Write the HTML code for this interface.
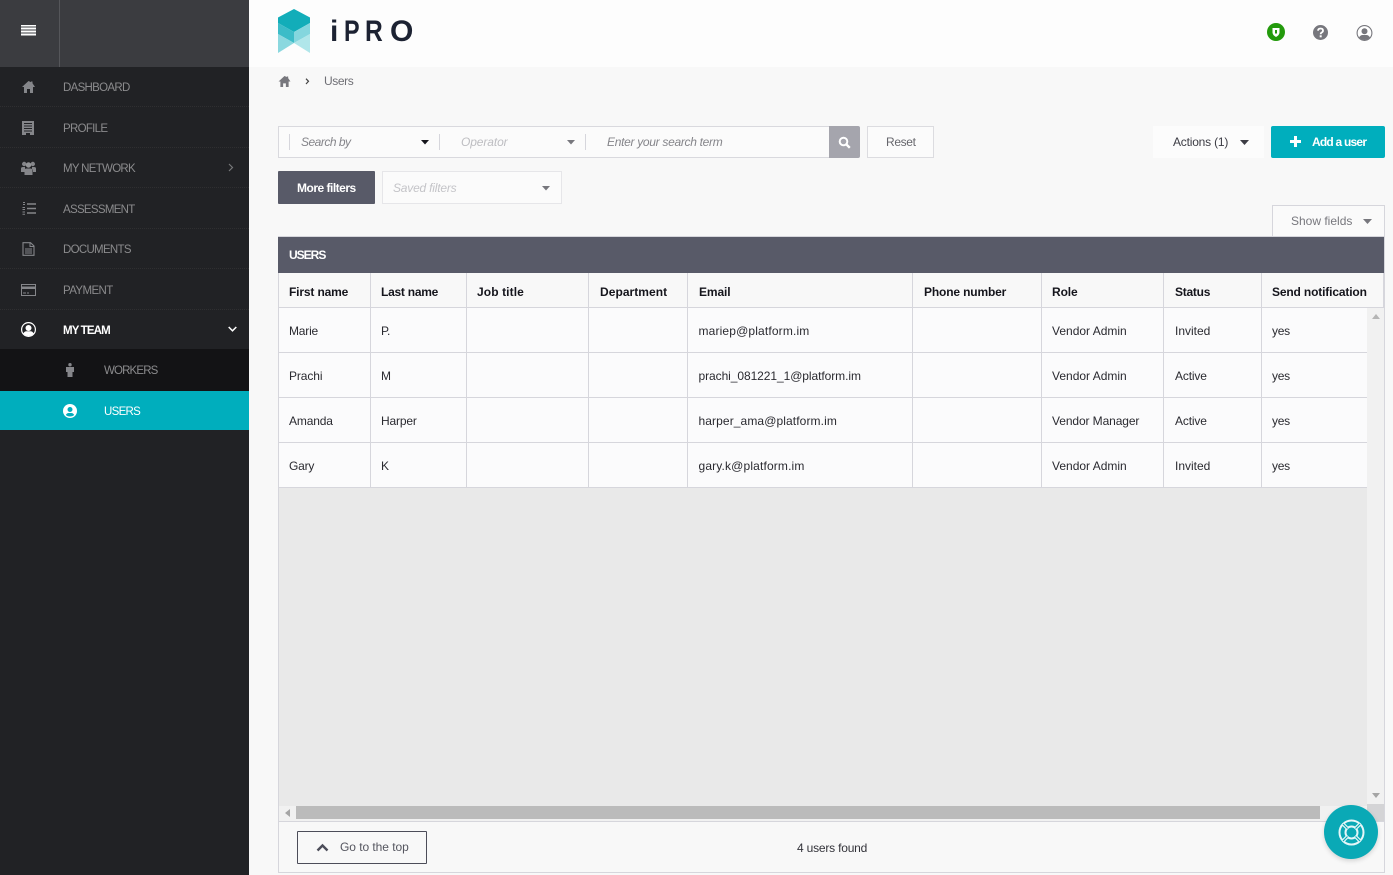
<!DOCTYPE html>
<html><head><meta charset="utf-8"><title>Users</title>
<style>
*{box-sizing:border-box}
html,body{margin:0;padding:0;width:1393px;height:875px;overflow:hidden;background:#f8f8f8;font-family:"Liberation Sans",sans-serif;font-size:12px;color:#222}
.a{position:absolute}
.t{position:absolute;white-space:nowrap;line-height:16px;letter-spacing:-.2px}
.n{font-size:11.5px;color:#8b8b8d;letter-spacing:-.7px;margin-top:1px}
.h{font-weight:bold;color:#15151c;font-size:12px;letter-spacing:-.1px}
.c{color:#2a2a30;font-size:12px;letter-spacing:0}
.l{position:absolute;background:#d6d6dc}
.sep{position:absolute;left:0;width:249px;height:0;border-top:1px dotted #2f2f31}
.lg{position:absolute;top:14px;font-size:30px;line-height:34px;font-weight:bold;color:#1c2232;transform-origin:0 50%}
svg{position:absolute;display:block}
</style></head><body>
<div class="a" style="left:0;top:0;width:1393px;height:67px;background:#fdfdfd"></div>
<div class="a" style="left:0;top:0;width:249px;height:875px;background:#212225"></div>
<div class="a" style="left:0;top:0;width:249px;height:67px;background:#3b3c40"></div>
<div class="a" style="left:59px;top:0;width:1px;height:67px;background:#55565a"></div>
<svg style="left:21px;top:25px" width="15" height="11"><path d="M0 .5h15M0 3.500h15M0 6.500h15M0 9.500h15" stroke="#fff" stroke-width="2"/></svg>
<div class="sep" style="top:106px"></div><div class="sep" style="top:147px"></div><div class="sep" style="top:187px"></div><div class="sep" style="top:228px"></div><div class="sep" style="top:268px"></div><div class="sep" style="top:309px"></div>
<div class="a" style="left:0;top:349px;width:249px;height:42px;background:#131315"></div>
<div class="a" style="left:0;top:391px;width:249px;height:39px;background:#00aebd"></div>
<svg style="left:22px;top:81px" width="13" height="12" viewBox="0 0 13 12"><path d="M6.500 0L0 6h2v6h3V8h3v4h3V6h2L10.500 2.300V.5H9v.6L6.500 0z" fill="#85868a"/></svg>
<svg style="left:22px;top:121px" width="12" height="14" viewBox="0 0 12 14"><path d="M0 0h12v14H8v-2H4v2H0z" fill="#85868a"/><path d="M2 2.500h8M2 5h8M2 7.500h8M2 10h8" stroke="#212225" stroke-width="1"/></svg>
<svg style="left:21px;top:161px" width="15" height="14" viewBox="0 0 15 14"><circle cx="3.200" cy="3" r="2.200" fill="#85868a"/><circle cx="11.800" cy="3" r="2.200" fill="#85868a"/><circle cx="7.500" cy="4" r="2.700" fill="#939497"/><path d="M0 11V7.500Q0 6 2 6h2v5zM15 11V7.500Q15 6 13 6h-2v5zM3.500 14V9.500Q3.500 7.500 5.500 7.500h4q2 0 2 2V14z" fill="#85868a"/></svg>
<svg style="left:22px;top:202px" width="14" height="13" viewBox="0 0 14 13"><path d="M5 2h9M5 6.500h9M5 11h9" stroke="#85868a" stroke-width="1.600"/><path d="M1 .5h2M1 2.500h2M.5 5.500h2.500M.5 7.500h2.500M.5 10h2.500M.5 12.300h2.500" stroke="#85868a" stroke-width="1"/></svg>
<svg style="left:22px;top:242px" width="13" height="14" viewBox="0 0 13 14"><path d="M1 .7h7.500L12 4v9.300H1z" fill="none" stroke="#85868a" stroke-width="1.100"/><path d="M8 1v3.500h4M3 7h7M3 9h7M3 11h7" stroke="#85868a" fill="none"/></svg>
<svg style="left:21px;top:284px" width="15" height="12" viewBox="0 0 15 12"><rect x=".5" y=".5" width="14" height="11" fill="none" stroke="#85868a"/><path d="M0 2.500h15V5H0z" fill="#85868a"/><path d="M2 9h3M6 9h2" stroke="#85868a"/></svg>
<svg style="left:21px;top:322px" width="15" height="15" viewBox="0 0 15 15"><circle cx="7.500" cy="7.500" r="7.500" fill="#fff"/><circle cx="7.500" cy="7.500" r="6.300" fill="#212225"/><circle cx="7.500" cy="6" r="3" fill="#fff"/><path d="M2.300 11.500Q3.500 9.300 5.500 9.300h4q2 0 3.200 2.200Q10.500 14 7.500 14t-5.200-2.500z" fill="#fff"/></svg>
<svg style="left:66px;top:363px" width="8" height="14" viewBox="0 0 8 14"><circle cx="4" cy="1.700" r="1.700" fill="#85868a"/><path d="M0 4h8v5H6.500v5h-5V9H0z" fill="#85868a"/></svg>
<svg style="left:63px;top:404px" width="14" height="14" viewBox="0 0 14 14"><circle cx="7" cy="7" r="7" fill="#fff"/><circle cx="7" cy="5.500" r="2.500" fill="#00aebd"/><path d="M2.800 11Q4 9 5.500 9h3q1.500 0 2.700 2Q9.500 12.500 7 12.500T2.800 11z" fill="#00aebd"/></svg>
<div class="t n" style="left:63px;top:79px">DASHBOARD</div>
<div class="t n" style="left:63px;top:120px">PROFILE</div>
<div class="t n" style="left:63px;top:160px">MY NETWORK</div>
<div class="t n" style="left:63px;top:201px">ASSESSMENT</div>
<div class="t n" style="left:63px;top:241px">DOCUMENTS</div>
<div class="t n" style="left:63px;top:282px;letter-spacing:-.6px">PAYMENT</div>
<div class="t n" style="left:63px;top:322px;color:#fff;font-weight:bold;letter-spacing:-.85px">MY TEAM</div>
<div class="t n" style="left:104px;top:362px;letter-spacing:-.85px">WORKERS</div>
<div class="t n" style="left:104px;top:403px;color:#fff">USERS</div>
<svg style="left:228px;top:163px" width="6" height="9"><path d="M1 1l3.500 3.500L1 8" fill="none" stroke="#77787a" stroke-width="1.200"/></svg>
<svg style="left:228px;top:326px" width="9" height="7"><path d="M.7 1l3.800 3.800L8.300 1" fill="none" stroke="#fff" stroke-width="1.500"/></svg>

<svg style="left:278px;top:9px" width="32" height="44" viewBox="0 0 32 44"><path d="M16 0L32 8.500V14L16 23 0 14V8.500z" fill="#12adb9"/><path d="M0 14L16 23V34L0 25z" fill="#3cbcc8"/><path d="M32 14L16 23V34L32 25z" fill="#84d6de"/><path d="M0 25L16 34 0 44z" fill="#8bd8df"/><path d="M32 25L16 34 32 44z" fill="#b0e6ea"/></svg>
<div class="lg" style="left:330px;top:15px">i</div>
<div class="lg" style="left:343.500px;top:15px;transform:scaleX(.78)">P</div>
<div class="lg" style="left:364.500px;top:15px;transform:scaleX(.82)">R</div>
<div class="lg" style="left:390px;top:15px">O</div>

<svg style="left:1267px;top:23px" width="18" height="18" viewBox="0 0 18 18"><circle cx="9" cy="9" r="9" fill="#239a0c"/><path d="M5.500 5h7v4.500Q12.500 12 9 14 5.500 12 5.500 9.500z" fill="#fff"/><path d="M8 7h2v3.500H8z" fill="#239a0c"/></svg>
<svg style="left:1313px;top:25px" width="15" height="15" viewBox="0 0 15 15"><circle cx="7.500" cy="7.500" r="7.500" fill="#77777d"/><path d="M5 5.700Q5.200 3.500 7.500 3.500 10 3.500 10 5.600 10 6.800 8.700 7.500 7.700 8 7.700 9.300" fill="none" stroke="#fff" stroke-width="1.800"/><rect x="6.700" y="10.300" width="2" height="2" fill="#fff"/></svg>
<svg style="left:1356px;top:25px" width="17" height="16" viewBox="0 0 17 16"><circle cx="8.500" cy="8" r="7.400" fill="#fff" stroke="#77777d" stroke-width="1.100"/><circle cx="8.500" cy="6.300" r="3" fill="#77777d"/><path d="M3 12.500Q4.500 10 6.500 10h4q2 0 3.500 2.500Q11.500 15 8.500 15T3 12.500z" fill="#77777d"/></svg>

<svg style="left:278px;top:76px" width="13" height="11" viewBox="0 0 13 12"><path d="M6.500 0L0 6h2v6h3V8h3v4h3V6h2L10.500 2.300V.5H9v.6L6.500 0z" fill="#77777d"/></svg>
<svg style="left:305px;top:78px" width="5" height="7"><path d="M1 .7l2.500 2.600L1 6" fill="none" stroke="#444" stroke-width="1.200"/></svg>
<div class="t" style="left:324px;top:73px;color:#6f6f75;letter-spacing:-.4px">Users</div>

<div class="a" style="left:278px;top:126px;width:551px;height:32px;background:#fbfbfb;border:1px solid #d9d9de;border-right:0"></div>
<div class="l" style="left:289px;top:134px;width:1px;height:16px"></div>
<div class="l" style="left:439px;top:134px;width:1px;height:16px"></div>
<div class="l" style="left:585px;top:134px;width:1px;height:16px"></div>
<div class="t" style="left:301px;top:134px;color:#85858a;font-style:italic;letter-spacing:-.5px">Search by</div>
<div class="t" style="left:461px;top:134px;color:#bdbdc1;font-style:italic;letter-spacing:-.1px">Operator</div>
<div class="t" style="left:607px;top:134px;color:#85858a;font-style:italic;letter-spacing:-.3px">Enter your search term</div>
<svg style="left:421px;top:140px" width="8" height="5"><path d="M0 0h8L4 4.500z" fill="#15151c"/></svg>
<svg style="left:567px;top:140px" width="8" height="5"><path d="M0 0h8L4 4.500z" fill="#77777d"/></svg>
<div class="a" style="left:829px;top:126px;width:31px;height:32px;background:#a5a5ad;border-radius:0 2px 2px 0"></div>
<svg style="left:838px;top:136px" width="13" height="13"><circle cx="5.500" cy="5.500" r="3.800" fill="none" stroke="#fff" stroke-width="2"/><path d="M8.300 8.300l3.500 3.500" stroke="#fff" stroke-width="2.400"/></svg>
<div class="a" style="left:867px;top:126px;width:67px;height:32px;background:#fbfbfb;border:1px solid #dcdce0"></div>
<div class="t" style="left:886px;top:134px;color:#66666c;letter-spacing:-.35px">Reset</div>

<div class="a" style="left:1153px;top:126px;width:111px;height:32px;background:#fcfcfc"></div>
<div class="t" style="left:1173px;top:134px;color:#3c3c44">Actions (1)</div>
<svg style="left:1240px;top:140px" width="9" height="5"><path d="M0 0h9L4.500 5z" fill="#3c3c44"/></svg>
<div class="a" style="left:1271px;top:126px;width:114px;height:32px;background:#00aebd;border-radius:2px"></div>
<svg style="left:1290px;top:136px" width="11" height="11"><path d="M4 0h3v4h4v3H7v4H4V7H0V4h4z" fill="#fff"/></svg>
<div class="t" style="left:1312px;top:134px;color:#fff;font-weight:bold;letter-spacing:-.78px">Add a user</div>

<div class="a" style="left:278px;top:171px;width:97px;height:33px;background:#585a68;border-radius:1px"></div>
<div class="t" style="left:297px;top:180px;color:#fff;font-weight:bold;letter-spacing:-.5px">More filters</div>
<div class="a" style="left:382px;top:171px;width:180px;height:33px;background:#fbfbfb;border:1px solid #e6e6e9"></div>
<div class="t" style="left:393px;top:180px;color:#c4c4c8;font-style:italic">Saved filters</div>
<svg style="left:542px;top:186px" width="8" height="5"><path d="M0 0h8L4 4.500z" fill="#77777d"/></svg>

<div class="a" style="left:1272px;top:205px;width:113px;height:32px;background:#fafafa;border:1px solid #d6d6dc;border-bottom:0"></div>
<div class="t" style="left:1291px;top:213px;color:#77777d;letter-spacing:0">Show fields</div>
<svg style="left:1363px;top:219px" width="9" height="5"><path d="M0 0h9L4.500 5z" fill="#77777d"/></svg>

<div class="a" style="left:278px;top:236px;width:1107px;height:637px;background:#f8f8f8;border:1px solid #d6d6dc"></div>
<div class="a" style="left:278px;top:237px;width:1106px;height:36px;background:#585a68"></div>
<div class="t" style="left:289px;top:247px;color:#fff;font-weight:bold;letter-spacing:-1px">USERS</div>

<div class="a" style="left:279px;top:308px;width:1088px;height:180px;background:#fbfbfc"></div>
<div class="a" style="left:279px;top:488px;width:1088px;height:318px;background:#e9e9e9"></div>
<div class="a" style="left:1367px;top:308px;width:17px;height:498px;background:#f1f1f1"></div>
<div class="l" style="left:279px;top:307px;width:1105px;height:1px"></div>
<div class="l" style="left:279px;top:352px;width:1088px;height:1px"></div>
<div class="l" style="left:279px;top:397px;width:1088px;height:1px"></div>
<div class="l" style="left:279px;top:442px;width:1088px;height:1px"></div>
<div class="l" style="left:279px;top:487px;width:1088px;height:1px"></div>
<div class="l" style="left:370px;top:273px;width:1px;height:215px"></div>
<div class="l" style="left:466px;top:273px;width:1px;height:215px"></div>
<div class="l" style="left:588px;top:273px;width:1px;height:215px"></div>
<div class="l" style="left:687px;top:273px;width:1px;height:215px"></div>
<div class="l" style="left:912px;top:273px;width:1px;height:215px"></div>
<div class="l" style="left:1041px;top:273px;width:1px;height:215px"></div>
<div class="l" style="left:1163px;top:273px;width:1px;height:215px"></div>
<div class="l" style="left:1261px;top:273px;width:1px;height:215px"></div>
<div class="l" style="left:1383px;top:273px;width:1px;height:34px"></div>

<div class="t h" style="left:289px;top:284px;letter-spacing:-.15px">First name</div>
<div class="t h" style="left:381px;top:284px;letter-spacing:-.25px">Last name</div>
<div class="t h" style="left:477px;top:284px;letter-spacing:.1px">Job title</div>
<div class="t h" style="left:600px;top:284px;letter-spacing:.05px">Department</div>
<div class="t h" style="left:699px;top:284px">Email</div>
<div class="t h" style="left:924px;top:284px;letter-spacing:-.15px">Phone number</div>
<div class="t h" style="left:1052px;top:284px">Role</div>
<div class="t h" style="left:1175px;top:284px;letter-spacing:-.25px">Status</div>
<div class="t h" style="left:1272px;top:284px;letter-spacing:-.15px">Send notification</div>

<div class="t c" style="left:289px;top:323px;letter-spacing:-.2px">Marie</div><div class="t c" style="left:381px;top:323px;letter-spacing:-.4px">P.</div><div class="t c" style="left:698.500px;top:323px;letter-spacing:.15px">mariep@platform.im</div><div class="t c" style="left:1052px;top:323px">Vendor Admin</div><div class="t c" style="left:1175px;top:323px">Invited</div><div class="t c" style="left:1272px;top:323px;letter-spacing:-.3px">yes</div>
<div class="t c" style="left:289px;top:368px;letter-spacing:-.1px">Prachi</div><div class="t c" style="left:381px;top:368px">M</div><div class="t c" style="left:698.500px;top:368px;letter-spacing:-.07px">prachi_081221_1@platform.im</div><div class="t c" style="left:1052px;top:368px">Vendor Admin</div><div class="t c" style="left:1175px;top:368px;letter-spacing:-.15px">Active</div><div class="t c" style="left:1272px;top:368px;letter-spacing:-.3px">yes</div>
<div class="t c" style="left:289px;top:413px;letter-spacing:-.15px">Amanda</div><div class="t c" style="left:381px;top:413px;letter-spacing:-.15px">Harper</div><div class="t c" style="left:698.500px;top:413px;letter-spacing:.1px">harper_ama@platform.im</div><div class="t c" style="left:1052px;top:413px;letter-spacing:-.1px">Vendor Manager</div><div class="t c" style="left:1175px;top:413px;letter-spacing:-.15px">Active</div><div class="t c" style="left:1272px;top:413px;letter-spacing:-.3px">yes</div>
<div class="t c" style="left:289px;top:458px;letter-spacing:-.2px">Gary</div><div class="t c" style="left:381px;top:458px">K</div><div class="t c" style="left:698.500px;top:458px;letter-spacing:.15px">gary.k@platform.im</div><div class="t c" style="left:1052px;top:458px">Vendor Admin</div><div class="t c" style="left:1175px;top:458px">Invited</div><div class="t c" style="left:1272px;top:458px;letter-spacing:-.3px">yes</div>

<svg style="left:1372px;top:314px" width="8" height="5"><path d="M4 0l4 5H0z" fill="#b5b5b5"/></svg>
<svg style="left:1372px;top:793px" width="8" height="5"><path d="M0 0h8L4 5z" fill="#a5a5a5"/></svg>
<div class="a" style="left:279px;top:806px;width:1105px;height:16px;background:#f1f1f1"></div>
<div class="a" style="left:296px;top:806px;width:1024px;height:13px;background:#bbbbbb"></div>
<div class="a" style="left:1367px;top:804px;width:17px;height:18px;background:#d4d4d6"></div>
<svg style="left:285px;top:809px" width="5" height="8"><path d="M5 0v8L0 4z" fill="#a5a5a5"/></svg>
<div class="l" style="left:279px;top:821px;width:1105px;height:1px"></div>

<div class="a" style="left:297px;top:831px;width:130px;height:33px;border:1px solid #4c4d59;border-radius:1px"></div>
<svg style="left:316px;top:843px" width="13" height="9"><path d="M1.500 7.500L6.500 2.500l5 5" fill="none" stroke="#4c4d59" stroke-width="2.400"/></svg>
<div class="t" style="left:340px;top:839px;color:#55565f;letter-spacing:-.05px">Go to the top</div>
<div class="t" style="left:797px;top:840px;color:#33333a">4 users found</div>

<div class="a" style="left:1324px;top:805px;width:54px;height:54px;border-radius:50%;background:#0aa9b6;box-shadow:0 2px 5px rgba(0,0,0,.15)"></div>
<svg style="left:1338px;top:819px" width="27" height="27" viewBox="0 0 27 27"><circle cx="13.500" cy="13.500" r="12" fill="none" stroke="#e5f6f8" stroke-width="2"/><circle cx="13.500" cy="13.500" r="6" fill="none" stroke="#e5f6f8" stroke-width="2"/><path d="M5 5l4.500 4.500M22 5l-4.500 4.500M5 22l4.500-4.500M22 22l-4.500-4.500" stroke="#e5f6f8" stroke-width="3.500"/><path d="M5 5l4.500 4.500M22 5l-4.500 4.500M5 22l4.500-4.500M22 22l-4.500-4.500" stroke="#0aa9b6" stroke-width="1.200"/></svg>
</body></html>
